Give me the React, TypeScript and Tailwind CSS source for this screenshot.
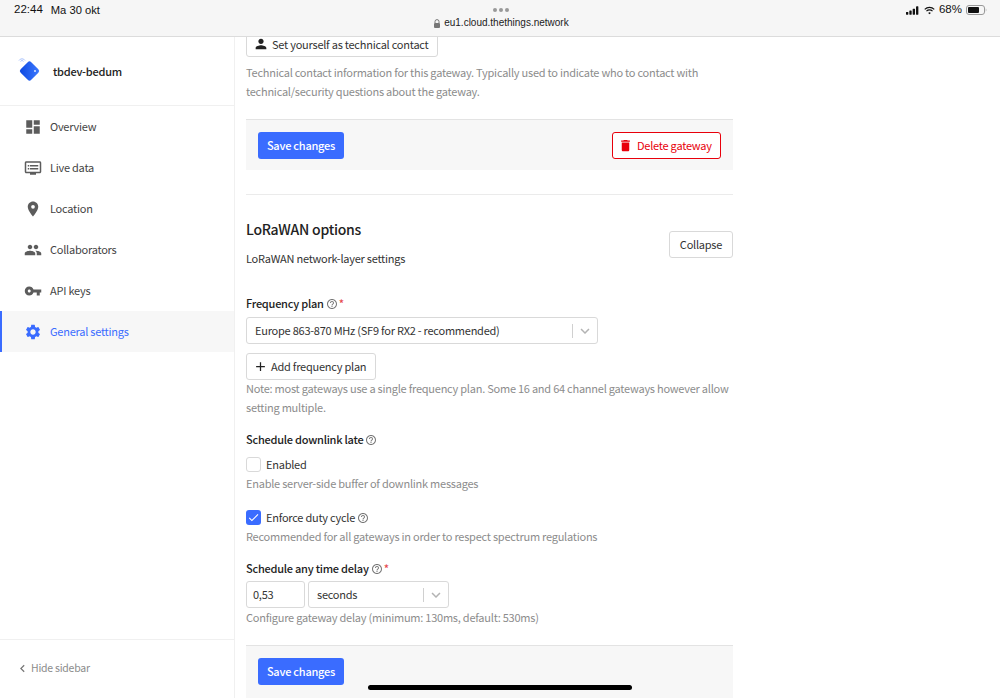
import { MdDashboard, MdOutlineDvr, MdPlace, MdPeople, MdVpnKey, MdSettings, MdPerson, MdDelete, MdAdd, MdCheck, MdKeyboardArrowLeft, MdKeyboardArrowDown, MdHelpOutline } from "react-icons/md";

const nav = [
  { label: "Overview", icon: MdDashboard },
  { label: "Live data", icon: MdOutlineDvr },
  { label: "Location", icon: MdPlace },
  { label: "Collaborators", icon: MdPeople },
  { label: "API keys", icon: MdVpnKey },
  { label: "General settings", icon: MdSettings, active: true },
];

function Help() {
  return <MdHelpOutline className="ml-[2px] text-[12px] text-[#777]" />;
}

function Required() {
  return <span className="ml-[1px] text-[#e5484d]">*</span>;
}

function Label({ children }: { children: React.ReactNode }) {
  return <div className="flex h-[19px] items-center text-[11px] leading-[19px] font-medium text-[#222]">{children}</div>;
}

function Hint({ children, className = "" }: { children: React.ReactNode; className?: string }) {
  return <p className={`text-[11px] leading-[19px] text-[#8c8c8c] ${className}`}>{children}</p>;
}

function SaveButton() {
  return (
    <button className="flex h-[27px] w-[86px] items-center justify-center rounded-[3px] bg-[#3a6cff] text-[11px] font-medium whitespace-nowrap text-white">
      Save changes
    </button>
  );
}

function SelectBox({ value, className }: { value: string; className: string }) {
  return (
    <div className={`flex h-[27px] items-center rounded-[3px] border border-[#d9d9d9] bg-white text-[11px] text-[#333] ${className}`}>
      <span className="flex-1">{value}</span>
      <span className="h-[14px] w-px bg-[#d0d0d0]" />
      <MdKeyboardArrowDown className="mx-[3px] text-[18px] text-[#b3b3b3]" />
    </div>
  );
}

export default function App() {
  return (
    <div className="relative flex h-[698px] w-[1000px] flex-col overflow-hidden bg-white font-['Noto_Sans_CJK_JP','Noto_Sans',sans-serif] tracking-[-0.24px]">
      {/* ios safari bar */}
      <header className="relative z-10 flex h-[37px] shrink-0 justify-between border-b border-[#dcdcdc] bg-[#f6f6f6] pt-[3px] pr-[13px] pl-[14px] font-['Liberation_Sans',sans-serif] text-[11.5px] tracking-normal text-[#111]">
        <div className="flex h-[14px] items-center gap-[8px]">
          <span>22:44</span>
          <span className="text-[11.2px]">Ma 30 okt</span>
        </div>
        <div className="mr-[4px] flex flex-col items-center">
          <div className="flex h-[13px] items-center gap-[2px]">
            <span className="h-[4px] w-[4px] rounded-full bg-[#999]" />
            <span className="h-[4px] w-[4px] rounded-full bg-[#999]" />
            <span className="h-[4px] w-[4px] rounded-full bg-[#999]" />
          </div>
          <div className="flex items-center gap-[3px] text-[10px] leading-[14px] text-[#222]">
            <svg width="8" height="9" viewBox="0 0 8 9">
              <path d="M2 4V2.6a2 2 0 0 1 4 0V4" fill="none" stroke="#777" />
              <rect x="1" y="4" width="6" height="5" rx="1" fill="#777" />
            </svg>
            eu1.cloud.thethings.network
          </div>
        </div>
        <div className="flex h-[14px] items-center gap-[4px]">
          <svg width="13" height="9" viewBox="0 0 14 9" fill="#111" className="mr-[1px]">
            <rect x="0" y="6" width="2.5" height="3" rx=".5" />
            <rect x="3.6" y="4.5" width="2.5" height="4.5" rx=".5" />
            <rect x="7.2" y="2.5" width="2.5" height="6.5" rx=".5" />
            <rect x="10.8" y="0" width="2.5" height="9" rx=".5" />
          </svg>
          <svg width="11" height="9" viewBox="0 0 12 9" fill="none" stroke="#111" strokeWidth="1.3">
            <path d="M.8 3.2a7.4 7.4 0 0 1 10.4 0" />
            <path d="M2.7 5.2a4.6 4.6 0 0 1 6.6 0" />
            <path d="M6 8.6 4.6 7.1a2 2 0 0 1 2.8 0Z" fill="#111" stroke="none" />
          </svg>
          <span>68%</span>
          <svg width="21" height="10" viewBox="0 0 21 10">
            <rect x=".5" y=".5" width="18" height="9" rx="2.5" fill="none" stroke="#999" />
            <rect x="2" y="2" width="11" height="6" rx="1" fill="#111" />
            <path d="M19.8 3.4c.7.3.7 2.9 0 3.2Z" fill="#999" />
          </svg>
        </div>
      </header>

      <div className="flex min-h-0 flex-1">
        {/* sidebar */}
        <aside className="flex w-[235px] shrink-0 flex-col border-r border-[#f0f0f0]">
          <div className="flex h-[69px] items-center gap-[12px] border-b border-[#f0f0f0] pl-[18px]">
            <svg width="23" height="26" viewBox="0 1.5 23 26">
              <defs>
                <linearGradient id="gw" x1="0" y1="1" x2="1" y2="0">
                  <stop offset="0" stopColor="#0b46e0" />
                  <stop offset="1" stopColor="#3f7bff" />
                </linearGradient>
              </defs>
              <rect x="4" y="7" width="15" height="15" rx="2.5" transform="rotate(45 11.5 14.5)" fill="url(#gw)" />
              <path d="M1 4a3.5 3.5 0 0 1 6 0" fill="none" stroke="#a9c2fb" strokeWidth="1" />
              <path d="M2.6 5a1.5 1.5 0 0 1 2.8 0" fill="none" stroke="#a9c2fb" strokeWidth="1" />
              <circle cx="17" cy="14.5" r="1" fill="#dce7ff" />
            </svg>
            <span className="text-[11px] font-medium text-[#222]">tbdev-bedum</span>
          </div>
          <nav className="flex flex-col">
            {nav.map((item) => (
              <div
                key={item.label}
                className={`flex h-[41px] items-center gap-[8px] border-l-[2px] pl-[22px] text-[11px] ${
                  item.active ? "border-[#3a6cff] bg-[#f7f7f7] text-[#3a6cff]" : "border-transparent text-[#444]"
                }`}
              >
                <item.icon className={`text-[18px] ${item.active ? "text-[#3a6cff]" : "text-[#5c5c5c]"}`} />
                {item.label}
              </div>
            ))}
          </nav>
          <div className="mt-auto flex h-[59px] items-center gap-[1px] border-t border-[#f0f0f0] pb-[2px] pl-[15px] text-[10.5px] text-[#8c8c8c]">
            <MdKeyboardArrowLeft className="text-[15px] text-[#777]" />
            Hide sidebar
          </div>
        </aside>

        {/* main form */}
        <main className="min-w-0 flex-1 overflow-hidden pl-[11px]">
          <div className="-mt-[7px] w-[487px]">
            <button className="flex h-[27px] w-[192px] items-center gap-[3px] rounded-[3px] border border-[#d9d9d9] pl-[6px] text-[11px] leading-[14px] whitespace-nowrap text-[#333]">
              <MdPerson className="text-[16px] text-[#222]" />
              Set yourself as technical contact
            </button>
            <Hint className="mt-[6px]">
              Technical contact information for this gateway. Typically used to indicate who to contact with technical/security questions about the gateway.
            </Hint>
            <div className="mt-[18px] flex h-[51px] items-center justify-between border-t border-[#e3e3e3] bg-[#f7f7f7] px-[12px]">
              <SaveButton />
              <button className="flex h-[27px] w-[109px] items-center gap-[4px] rounded-[3px] border border-[#e8000b] bg-white pl-[5px] text-[11px] whitespace-nowrap text-[#e8000b]">
                <MdDelete className="text-[15px]" />
                Delete gateway
              </button>
            </div>
            <div className="mt-[24px] h-px bg-[#ebebeb]" />

            <div className="mt-[23px] flex items-start justify-between">
              <div>
                <h2 className="text-[14px] leading-[22px] font-medium text-[#222]">LoRaWAN options</h2>
                <p className="mt-[9px] text-[11px] leading-[19px] text-[#333]">LoRaWAN network-layer settings</p>
              </div>
              <button className="mt-[13px] h-[27px] w-[64px] rounded-[3px] border border-[#d9d9d9] text-[11px] text-[#333]">Collapse</button>
            </div>

            <div className="mt-[26px]">
              <Label>
                Frequency plan
                <Help />
                <Required />
              </Label>
            </div>
            <SelectBox value="Europe 863-870 MHz (SF9 for RX2 - recommended)" className="mt-[4px] w-[352px] pl-[8px]" />
            <button className="mt-[9px] flex h-[27px] w-[130px] items-center gap-[3px] rounded-[3px] border border-[#d9d9d9] pl-[6px] text-[11px] whitespace-nowrap text-[#333]">
              <MdAdd className="text-[15px] text-[#222]" />
              Add frequency plan
            </button>
            <Hint className="mt-[-1px]">
              Note: most gateways use a single frequency plan. Some 16 and 64 channel gateways however allow setting multiple.
            </Hint>

            <div className="mt-[13px]">
              <Label>
                Schedule downlink late
                <Help />
              </Label>
            </div>
            <label className="mt-[6px] flex h-[19px] items-center gap-[5px] text-[11px] text-[#333]">
              <span className="h-[15px] w-[15px] rounded-[3px] border border-[#d9d9d9] bg-white" />
              Enabled
            </label>
            <Hint>Enable server-side buffer of downlink messages</Hint>

            <label className="mt-[15px] flex h-[19px] items-center gap-[5px] text-[11px] text-[#333]">
              <span className="flex h-[15px] w-[15px] items-center justify-center rounded-[3px] bg-[#3a6cff]">
                <MdCheck className="text-[13px] text-white" />
              </span>
              <span className="flex items-center">
                Enforce duty cycle
                <Help />
              </span>
            </label>
            <Hint>Recommended for all gateways in order to respect spectrum regulations</Hint>

            <div className="mt-[13px]">
              <Label>
                Schedule any time delay
                <Help />
                <Required />
              </Label>
            </div>
            <div className="mt-[3px] flex gap-[3px]">
              <div className="flex h-[27px] w-[59px] items-center rounded-[3px] border border-[#d9d9d9] pl-[6px] text-[11px] text-[#333]">0,53</div>
              <SelectBox value="seconds" className="w-[141px] pl-[8px]" />
            </div>
            <Hint>Configure gateway delay (minimum: 130ms, default: 530ms)</Hint>

            <div className="mt-[18px] flex h-[60px] items-start border-t border-[#e3e3e3] bg-[#f7f7f7] px-[12px] pt-[12px]">
              <SaveButton />
            </div>
          </div>
        </main>
      </div>

      <div className="absolute bottom-[8px] left-[368px] h-[5px] w-[264px] rounded-full bg-black" />
    </div>
  );
}
